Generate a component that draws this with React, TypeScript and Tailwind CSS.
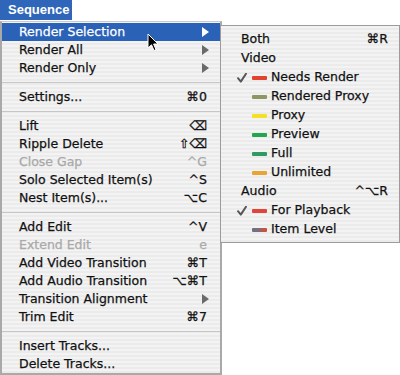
import React from "react";

type Item =
  | { kind: "sep" }
  | { kind: "item"; label: string; sc?: string; arrow?: boolean; disabled?: boolean; active?: boolean };

const mainItems: Item[] = [
  { kind: "item", label: "Render Selection", arrow: true, active: true },
  { kind: "item", label: "Render All", arrow: true },
  { kind: "item", label: "Render Only", arrow: true },
  { kind: "sep" },
  { kind: "item", label: "Settings...", sc: "⌘0" },
  { kind: "sep" },
  { kind: "item", label: "Lift", sc: "⌫" },
  { kind: "item", label: "Ripple Delete", sc: "⇧⌫" },
  { kind: "item", label: "Close Gap", sc: "^G", disabled: true },
  { kind: "item", label: "Solo Selected Item(s)", sc: "^S" },
  { kind: "item", label: "Nest Item(s)...", sc: "⌥C" },
  { kind: "sep" },
  { kind: "item", label: "Add Edit", sc: "^V" },
  { kind: "item", label: "Extend Edit", sc: "e", disabled: true },
  { kind: "item", label: "Add Video Transition", sc: "⌘T" },
  { kind: "item", label: "Add Audio Transition", sc: "⌥⌘T" },
  { kind: "item", label: "Transition Alignment", arrow: true },
  { kind: "item", label: "Trim Edit", sc: "⌘7" },
  { kind: "sep" },
  { kind: "item", label: "Insert Tracks..." },
  { kind: "item", label: "Delete Tracks..." },
];

type Sub = { label: string; header?: boolean; sc?: string; check?: boolean; bar?: string };

const subItems: Sub[] = [
  { label: "Both", header: true, sc: "⌘R" },
  { label: "Video", header: true },
  { label: "Needs Render", check: true, bar: "bg-[#e2432f]" },
  { label: "Rendered Proxy", bar: "bg-[#8e9663]" },
  { label: "Proxy", bar: "bg-[#f3e221]" },
  { label: "Preview", bar: "bg-[#23a64e]" },
  { label: "Full", bar: "bg-[#2f9a62]" },
  { label: "Unlimited", bar: "bg-[#e9a436]" },
  { label: "Audio", header: true, sc: "^⌥R" },
  { label: "For Playback", check: true, bar: "bg-[#e1443b]" },
  { label: "Item Level", bar: "bg-[linear-gradient(90deg,#6b7184,#7a6f80_40%,#e2482f)]" },
];

const stripes =
  "bg-[repeating-linear-gradient(0deg,#ebebeb_0px,#ebebeb_2px,#f3f3f3_2px,#f3f3f3_4px)]";

function Arrow({ white }: { white?: boolean }) {
  return (
    <svg width="7" height="10" viewBox="0 0 7 10" className="block">
      <path d="M0 0 L7 5 L0 10 Z" fill={white ? "#ffffff" : "#6a6a6a"} />
    </svg>
  );
}

function Check() {
  return (
    <svg width="10" height="10" viewBox="0 0 10 10" className="block">
      <path d="M1 5.2 L3.8 8.6 L9 0.8" fill="none" stroke="#575757" strokeWidth="2" strokeLinecap="round" strokeLinejoin="round" />
    </svg>
  );
}

export default function App() {
  return (
    <div
      className="relative w-[400px] h-[375px] overflow-hidden bg-white text-[12.5px] text-[#111] [-webkit-text-stroke:0.25px_currentColor]"
      style={{ fontFamily: '"DejaVu Sans", "Liberation Sans", sans-serif' }}
    >
      <div
        className="flex h-[20px] w-[72px] items-center whitespace-nowrap bg-[#2f66b9] pl-[8px] font-bold text-white text-[13px] [-webkit-text-stroke:0px]"
        style={{ fontFamily: '"Liberation Sans", sans-serif' }}
      >
        Sequence
      </div>
      <div className="mt-[1px] flex items-start">
        <div
          className={`w-[222px] shrink-0 border-l-2 border-r-2 border-b-2 border-t border-[#a9a9a9] border-t-[#c9c9c9] pt-[1px] ${stripes}`}
        >
          {mainItems.map((it, i) =>
            it.kind === "sep" ? (
              <div key={i} className="flex h-[11px] items-center">
                <div className="h-px w-full bg-[#c6c6c6]" />
              </div>
            ) : (
              <div
                key={i}
                className={`flex h-[18px] items-center pl-[17px] pr-[9px] ${
                  it.active ? "bg-[#2a62b7] text-white" : it.disabled ? "text-[#a9a9a9]" : ""
                }`}
              >
                <span className="flex-1 whitespace-nowrap">{it.label}</span>
                {it.sc && <span className="mr-[4px] whitespace-nowrap">{it.sc}</span>}
                {it.arrow && (
                  <span className="mr-[2px]">
                    <Arrow white={it.active} />
                  </span>
                )}
              </div>
            )
          )}
        </div>
        <div
          className={`-ml-[2px] mt-[4px] w-[180px] shrink-0 border border-[#9c9c9c] pt-[4px] pb-[3px] ${stripes}`}
        >
          {subItems.map((s, i) => (
            <div key={i} className="flex h-[19px] items-center pl-[16px] pr-[11px]">
              <span className="w-[15px] shrink-0">{s.check ? <Check /> : null}</span>
              {s.header ? (
                <span className="-ml-[11px] flex-1 whitespace-nowrap">{s.label}</span>
              ) : (
                <>
                  <span className={`h-[4px] w-[15px] shrink-0 rounded-[1px] ${s.bar}`} />
                  <span className="ml-[4px] flex-1 whitespace-nowrap">{s.label}</span>
                </>
              )}
              {s.sc && <span className="whitespace-nowrap">{s.sc}</span>}
            </div>
          ))}
        </div>
      </div>
      <svg
        className="absolute left-[147px] top-[33px]"
        width="13"
        height="20"
        viewBox="0 0 13 20"
      >
        <path
          d="M1 1 L1 15 L4.5 11.8 L7 17.5 L9 16.6 L6.6 11 L11 11 Z"
          fill="#000"
          stroke="#fff"
          strokeWidth="1"
          strokeLinejoin="round"
        />
      </svg>
    </div>
  );
}
